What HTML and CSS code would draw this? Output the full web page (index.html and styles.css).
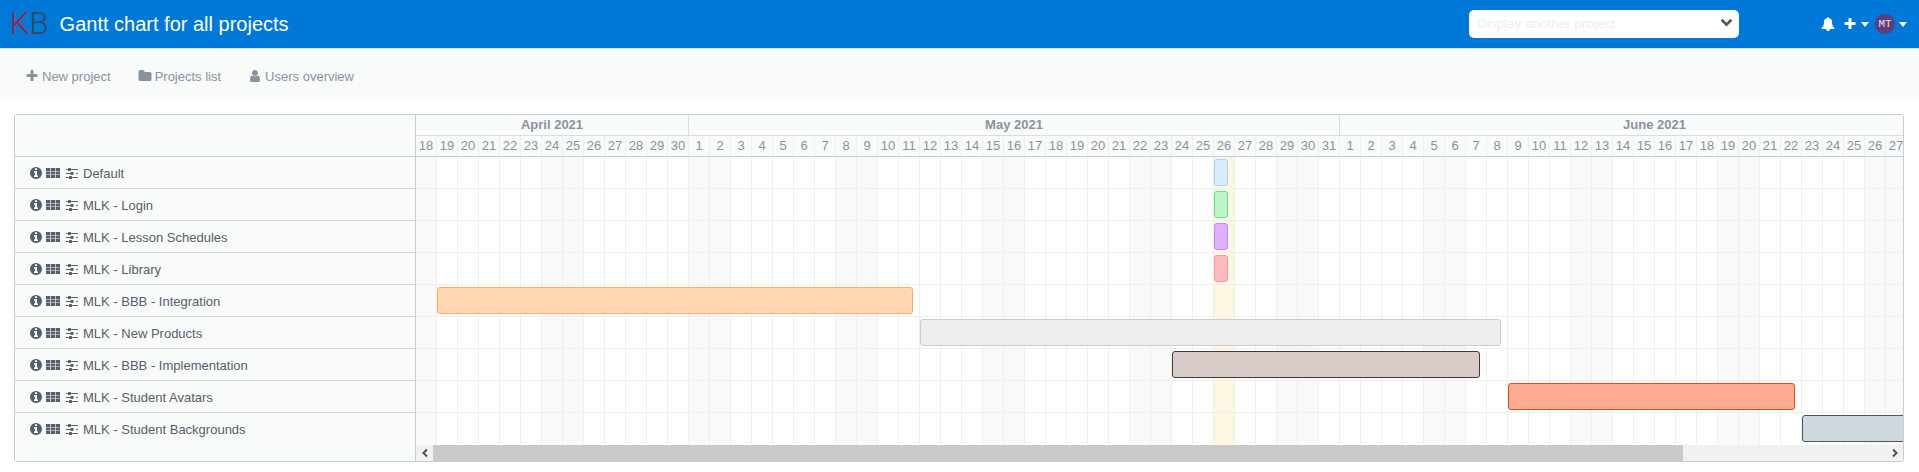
FILE: index.html
```html
<!DOCTYPE html>
<html lang="en">
<head>
  <meta charset="UTF-8" />
  <title>Gantt chart for all projects</title>
  <link rel="stylesheet" href="styles.css">
</head>
<body>
  <svg class="icon-defs">
    <symbol id="i-info" viewBox="0 0 1792 1792"><path d="M1152 1376v-160q0-14-9-23t-23-9h-96v-512q0-14-9-23t-23-9h-320q-14 0-23 9t-9 23v160q0 14 9 23t23 9h96v320h-96q-14 0-23 9t-9 23v160q0 14 9 23t23 9h448q14 0 23-9t9-23zm-128-896v-160q0-14-9-23t-23-9h-192q-14 0-23 9t-9 23v160q0 14 9 23t23 9h192q14 0 23-9t9-23zm640 416q0 209-103 385.5t-279.5 279.5-385.5 103-385.5-103-279.5-279.5-103-385.5 103-385.5 279.5-279.5 385.5-103 385.5 103 279.5 279.5 103 385.5z"/></symbol>
    <symbol id="i-th" viewBox="0 0 1792 1792"><path d="M0 256h544v384H0zM624 256h544v384H624zM1248 256h544v384h-544zM0 704h544v384H0zM624 704h544v384H624zM1248 704h544v384h-544zM0 1152h544v384H0zM624 1152h544v384H624zM1248 1152h544v384h-544z"/></symbol>
    <symbol id="i-sliders" viewBox="0 0 1792 1792"><path d="M480 1408v128h-352v-128h352zm352-128q26 0 45 19t19 45v256q0 26-19 45t-45 19h-256q-26 0-45-19t-19-45v-256q0-26 19-45t45-19h256zm160-384v128h-864v-128h864zm-640-512v128h-224v-128h224zm1312 1024v128h-736v-128h736zm-960-1152q26 0 45 19t19 45v256q0 26-19 45t-45 19h-256q-26 0-45-19t-19-45v-256q0-26 19-45t45-19h256zm320 512q26 0 45 19t19 45v256q0 26-19 45t-45 19h-256q-26 0-45-19t-19-45v-256q0-26 19-45t45-19h256zm640 128v128h-224v-128h224zm0-512v128h-864v-128h864z"/></symbol>
    <symbol id="i-plus" viewBox="0 0 1792 1792"><path d="M1600 736v192q0 40-28 68t-68 28h-416v416q0 40-28 68t-68 28h-192q-40 0-68-28t-28-68v-416h-416q-40 0-68-28t-28-68v-192q0-40 28-68t68-28h416v-416q0-40 28-68t68-28h192q40 0 68 28t28 68v416h416q40 0 68 28t28 68z"/></symbol>
    <symbol id="i-folder" viewBox="0 0 1792 1792"><path d="M1728 608v704q0 92-66 158t-158 66h-1216q-92 0-158-66t-66-158v-960q0-92 66-158t158-66h320q92 0 158 66t66 158v32h672q92 0 158 66t66 158z"/></symbol>
    <symbol id="i-user" viewBox="0 0 1792 1792"><path d="M1536 1399q0 109-62.5 187t-150.5 78h-854q-88 0-150.5-78t-62.5-187q0-85 8.5-160.5t31.5-152 58.5-131 94-89 134.5-34.5q131 128 313 128t313-128q76 0 134.5 34.5t94 89 58.5 131 31.5 152 8.5 160.5zm-256-887q0 159-112.5 271.5t-271.5 112.5-271.5-112.5-112.5-271.5 112.5-271.5 271.5-112.5 271.5 112.5 112.5 271.5z"/></symbol>
    <symbol id="i-bell" viewBox="0 0 1792 1792"><path d="M912 1696q0-16-16-16-59 0-101.5-42.5t-42.5-101.5q0-16-16-16t-16 16q0 73 51.5 124.5t124.5 51.5q16 0 16-16zm816-288q0 52-38 90t-90 38h-448q0 106-75 181t-181 75-181-75-75-181h-448q-52 0-90-38t-38-90q50-42 91-88t85-119.5 74.5-158.5 50-206 19.5-260q0-152 117-282.5t307-158.5q-8-19-8-39 0-40 28-68t68-28 68 28 28 68q0 20-8 39 190 28 307 158.5t117 282.5q0 139 19.5 260t50 206 74.5 158.5 85 119.5 91 88z"/></symbol>
    <symbol id="i-caret" viewBox="0 0 8 5"><path d="M0 0h8L4 5z"/></symbol>
  </svg>

  <header class="topbar">
    <a class="logo"><span class="logo-k">K</span><span class="logo-b">B</span></a>
    <h1 class="title">Gantt chart for all projects</h1>
    <div class="project-select">
      <span>Display another project</span>
      <svg class="chevron" viewBox="0 0 12 8"><path d="M1.5 1.5 6 6l4.500-4.500" /></svg>
    </div>
    <div class="user-menu">
      <svg class="icon icon-bell"><use href="#i-bell"/></svg>
      <svg class="icon icon-add"><use href="#i-plus"/></svg>
      <svg class="caret"><use href="#i-caret"/></svg>
      <span class="avatar">MT</span>
      <svg class="caret"><use href="#i-caret"/></svg>
    </div>
  </header>

  <nav class="subnav">
    <a class="subnav-item"><svg class="icon"><use href="#i-plus"/></svg>New project</a>
    <a class="subnav-item"><svg class="icon"><use href="#i-folder"/></svg>Projects list</a>
    <a class="subnav-item"><svg class="icon"><use href="#i-user"/></svg>Users overview</a>
  </nav>

  <section class="gantt">
    <div class="gantt-side">
      <div class="side-head"></div>
      <div class="side-row">
        <svg class="icon"><use href="#i-info"/></svg><svg class="icon icon-th"><use href="#i-th"/></svg><svg class="icon icon-sliders"><use href="#i-sliders"/></svg>Default
      </div>
      <div class="side-row">
        <svg class="icon"><use href="#i-info"/></svg><svg class="icon icon-th"><use href="#i-th"/></svg><svg class="icon icon-sliders"><use href="#i-sliders"/></svg>MLK - Login
      </div>
      <div class="side-row">
        <svg class="icon"><use href="#i-info"/></svg><svg class="icon icon-th"><use href="#i-th"/></svg><svg class="icon icon-sliders"><use href="#i-sliders"/></svg>MLK - Lesson Schedules
      </div>
      <div class="side-row">
        <svg class="icon"><use href="#i-info"/></svg><svg class="icon icon-th"><use href="#i-th"/></svg><svg class="icon icon-sliders"><use href="#i-sliders"/></svg>MLK - Library
      </div>
      <div class="side-row">
        <svg class="icon"><use href="#i-info"/></svg><svg class="icon icon-th"><use href="#i-th"/></svg><svg class="icon icon-sliders"><use href="#i-sliders"/></svg>MLK - BBB - Integration
      </div>
      <div class="side-row">
        <svg class="icon"><use href="#i-info"/></svg><svg class="icon icon-th"><use href="#i-th"/></svg><svg class="icon icon-sliders"><use href="#i-sliders"/></svg>MLK - New Products
      </div>
      <div class="side-row">
        <svg class="icon"><use href="#i-info"/></svg><svg class="icon icon-th"><use href="#i-th"/></svg><svg class="icon icon-sliders"><use href="#i-sliders"/></svg>MLK - BBB - Implementation
      </div>
      <div class="side-row">
        <svg class="icon"><use href="#i-info"/></svg><svg class="icon icon-th"><use href="#i-th"/></svg><svg class="icon icon-sliders"><use href="#i-sliders"/></svg>MLK - Student Avatars
      </div>
      <div class="side-row side-row-last">
        <svg class="icon"><use href="#i-info"/></svg><svg class="icon icon-th"><use href="#i-th"/></svg><svg class="icon icon-sliders"><use href="#i-sliders"/></svg>MLK - Student Backgrounds
      </div>
    </div>

    <div class="gantt-main">
      <div class="months">
        <div class="month month-apr">April 2021</div>
        <div class="month month-may">May 2021</div>
        <div class="month month-jun">June 2021</div>
      </div>
      <div class="days">
        <span>18</span><span>19</span><span>20</span><span>21</span><span>22</span><span>23</span><span>24</span><span>25</span><span>26</span><span>27</span><span>28</span><span>29</span><span>30</span>
        <span>1</span><span>2</span><span>3</span><span>4</span><span>5</span><span>6</span><span>7</span><span>8</span><span>9</span><span>10</span><span>11</span><span>12</span><span>13</span><span>14</span><span>15</span><span>16</span><span>17</span><span>18</span><span>19</span><span>20</span><span>21</span><span>22</span><span>23</span><span>24</span><span>25</span><span>26</span><span>27</span><span>28</span><span>29</span><span>30</span><span>31</span>
        <span>1</span><span>2</span><span>3</span><span>4</span><span>5</span><span>6</span><span>7</span><span>8</span><span>9</span><span>10</span><span>11</span><span>12</span><span>13</span><span>14</span><span>15</span><span>16</span><span>17</span><span>18</span><span>19</span><span>20</span><span>21</span><span>22</span><span>23</span><span>24</span><span>25</span><span>26</span><span>27</span>
      </div>
      <div class="rows">
        <div class="row"><div class="bar bar-blue" style="grid-column: 39 / span 1"></div></div>
        <div class="row"><div class="bar bar-green" style="grid-column: 39 / span 1"></div></div>
        <div class="row"><div class="bar bar-purple" style="grid-column: 39 / span 1"></div></div>
        <div class="row"><div class="bar bar-red" style="grid-column: 39 / span 1"></div></div>
        <div class="row"><div class="bar bar-orange" style="grid-column: 2 / span 23"></div></div>
        <div class="row"><div class="bar bar-grey" style="grid-column: 25 / span 28"></div></div>
        <div class="row"><div class="bar bar-brown" style="grid-column: 37 / span 15"></div></div>
        <div class="row"><div class="bar bar-deep-orange" style="grid-column: 53 / span 14"></div></div>
        <div class="row row-last"><div class="bar bar-blue-grey" style="grid-column: 67 / span 12"></div></div>
      </div>
      <div class="scrollbar">
        <span class="scroll-btn"><svg viewBox="0 0 8 10"><path d="M6 1.500 2.500 5 6 8.500" /></svg></span>
        <span class="scroll-thumb"></span>
        <span class="scroll-track"></span>
        <span class="scroll-btn"><svg viewBox="0 0 8 10"><path d="M2 1.500 5.500 5 2 8.500" /></svg></span>
      </div>
    </div>
  </section>
</body>
</html>
```

FILE: styles.css
```css
body {
  margin: 0;
  font-family: "Liberation Sans", Arial, sans-serif;
  font-size: 13px;
  color: #555f6b;
  background: #fff;
  overflow: hidden;
}
.icon-defs {
  display: none;
}
.icon {
  width: 14px;
  height: 14px;
  fill: currentColor;
  flex-shrink: 0;
}

/* top bar */
.topbar {
  display: flex;
  align-items: center;
  height: 48px;
  background: #0078d7;
  border-bottom: 1px solid #d9e3ea;
  color: #fff;
}
.logo {
  margin-left: 10px;
  font-family: Roboto, sans-serif;
  font-weight: 300;
  font-size: 31px;
  line-height: 48px;
}
.logo-k {
  color: #b01c2e;
}
.logo-b {
  color: #34495e;
}
.title {
  margin: 0 0 0 11px;
  font-size: 20px;
  font-weight: normal;
  flex-grow: 1;
}
.project-select {
  display: flex;
  align-items: center;
  justify-content: space-between;
  width: 270px;
  height: 28px;
  box-sizing: border-box;
  padding: 0 6px 1px 8px;
  background: #fff;
  border-radius: 5px;
  color: #eeeeee;
  font-size: 13.500px;
}
.chevron {
  width: 13px;
  height: 9px;
  margin-bottom: 3px;
  fill: none;
  stroke: #555;
  stroke-width: 2.400;
}
.user-menu {
  display: flex;
  align-items: center;
  margin-left: 82px;
  width: 98px;
}
.icon-bell {
  margin-right: 8px;
}
.icon-add {
  margin-right: 4px;
}
.caret {
  width: 8px;
  height: 5px;
  fill: #fff;
}
.avatar {
  display: flex;
  align-items: center;
  justify-content: center;
  width: 20px;
  height: 20px;
  margin: 0 4px 0 6px;
  border-radius: 50%;
  background: #613b7c;
  color: #e8e0ee;
  font-family: "Liberation Mono", monospace;
  font-size: 11px;
}

/* sub navigation */
.subnav {
  display: flex;
  align-items: center;
  gap: 27px;
  height: 46px;
  padding: 4px 0 0 25px;
  background: #f9fafa;
}
.subnav-item {
  display: flex;
  align-items: center;
  gap: 3px;
  font-size: 13px;
  color: #89939e;
}

/* chart */
.gantt {
  display: flex;
  height: 348px;
  margin: 15px 15px 0 14px;
  border: 1px solid #c5ced8;
  border-radius: 3px;
  box-sizing: border-box;
  overflow: hidden;
}
.gantt-side {
  width: 401px;
  box-sizing: border-box;
  flex-shrink: 0;
  background: #f9fafa;
  border-right: 1px solid #c5ced8;
}
.side-head {
  height: 41px;
  border-bottom: 1px solid #c5ced8;
}
.side-row {
  display: flex;
  align-items: center;
  height: 30px;
  padding: 1px 0 0 14px;
  border-bottom: 1px solid #ced3d9;
  font-size: 13px;
}
.side-row-last {
  border-bottom: none;
}
.icon-th {
  margin-left: 3px;
}
.icon-sliders {
  margin: 0 4px 0 5px;
}
.gantt-main {
  flex-grow: 1;
  min-width: 0;
  overflow: hidden;
}
.months {
  display: flex;
  width: 1554px;
  height: 20px;
  background: #f9fafa;
  border-bottom: 1px solid #d8dde2;
}
.month {
  flex-shrink: 0;
  box-sizing: border-box;
  border-right: 1px solid #d8dde2;
  text-align: center;
  font-weight: bold;
  font-size: 13px;
  line-height: 20px;
  color: #89939e;
}
.month-apr {
  width: 273px;
}
.month-may {
  width: 651px;
}
.month-jun {
  width: 630px;
}
.days {
  display: flex;
  height: 20px;
  background: #f9fafa;
  border-bottom: 1px solid #c5ced8;
}
.days span {
  flex: 0 0 21px;
  box-sizing: border-box;
  border-right: 1px solid #eef0f1;
  text-align: center;
  font-size: 13px;
  line-height: 20px;
  color: #89939e;
}
.rows {
  background-image:
    repeating-linear-gradient(to right, transparent 0 20px, #efefef 20px 21px),
    linear-gradient(to right, transparent 798px, #fdf6e3 798px 819px, transparent 819px),
    linear-gradient(to right, #f9f9f9 42px, transparent 42px);
  background-size: auto, auto, 147px 100%;
  background-position: 0 0, 0 0, 126px 0;
  background-repeat: repeat, no-repeat, repeat-x;
}
.row {
  display: grid;
  grid-template-columns: repeat(80, 21px);
  height: 29px;
  padding-top: 2px;
  border-bottom: 1px solid #efefef;
}
.row-last {
  border-bottom: none;
  height: 30px;
}
.bar {
  height: 27px;
  margin-right: 7px;
  box-sizing: border-box;
  border: 1px solid;
  border-radius: 3px;
}
.bar-blue { background: #dbebff; border-color: #a8cfff; }
.bar-green { background: #bdf4cb; border-color: #55ee77; }
.bar-purple { background: #dfb0ff; border-color: #cd85fe; }
.bar-red { background: #ffbbbb; border-color: #ff9797; }
.bar-orange { background: #ffd7b3; border-color: #ffac62; }
.bar-grey { background: #eeeeee; border-color: #cccccc; }
.bar-brown { background: #d7ccc8; border-color: #4e342e; }
.bar-deep-orange { background: #ffab91; border-color: #e64a19; }
.bar-blue-grey { background: #cfd8dc; border-color: #455a64; }

.scrollbar {
  display: flex;
  height: 16px;
  background: #f1f1f1;
}
.scroll-btn {
  display: flex;
  align-items: center;
  justify-content: center;
  width: 17px;
  flex-shrink: 0;
}
.scroll-btn svg {
  width: 8px;
  height: 10px;
  fill: none;
  stroke: #505050;
  stroke-width: 2;
}
.scroll-thumb {
  width: 1250px;
  background: #c9c9c9;
}
.scroll-track {
  flex-grow: 1;
}
```
